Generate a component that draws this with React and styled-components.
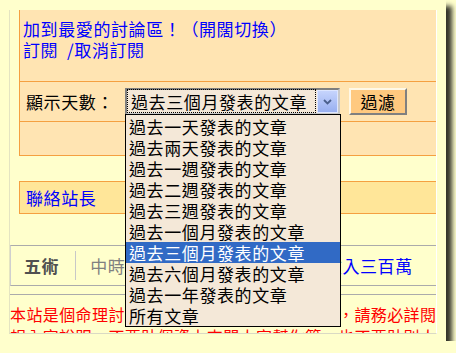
import React from "react";
import styled, { createGlobalStyle } from "styled-components";

const Global = createGlobalStyle`
  *, *::before, *::after { box-sizing: border-box; }
  html, body { margin: 0; padding: 0; background: #FFFFCC; }
  body {
    font-family: "Noto Sans CJK TC", "Noto Sans CJK SC", "Noto Sans", sans-serif;
    font-size: 17px;
    letter-spacing: 0.6px;
    line-height: 21px;
  }
`;

const Window = styled.div`
  width: 446px;
  height: 341px;
  padding: 10px 9px 7px;
  background: #FFFFCC;
  box-shadow: 6px 6px 5px rgba(0, 0, 0, 0.8);
`;

const Viewport = styled.div`
  height: 324px;
  border-left: 1px solid #E4E4C2;
  border-right: 1px solid #FFFFFF;
  border-bottom: 1px solid #DADAC4;
  overflow: hidden;
`;

const Content = styled.div`
  width: 450px;
  display: flex;
  flex-direction: column;
`;

const OrangeBox = styled.div`
  margin-left: 9px;
  background: #FFE4B2;
  border: 1px solid #F5A040;
  border-top: none;
  display: flex;
  flex-direction: column;
`;

const Row = styled.div`
  height: ${(p) => p.$h}px;
  border-bottom: ${(p) => (p.$line ? "1px solid #F5A040" : "none")};
  display: flex;
  flex-direction: ${(p) => (p.$column ? "column" : "row")};
  align-items: ${(p) => (p.$column ? "flex-start" : "center")};
  padding: ${(p) => p.$pad || "0"};
`;

const Link = styled.a`
  color: #0000FF;
  text-decoration: none;
  cursor: pointer;
  white-space: pre;
`;

const Label = styled.span`
  width: 99px;
  flex: none;
  color: #000;
  white-space: nowrap;
`;

const SelectWrap = styled.div`
  position: relative;
  width: 215px;
  height: 27px;
  border-style: solid;
  border-width: 2px;
  border-color: #7F7F7F #C8C8C8 #C8C8C8 #7F7F7F;
  background: #F4E8D8;
  display: flex;
  align-items: stretch;
`;

const SelectValue = styled.div`
  flex: 1;
  margin: -1px 1px 0 0;
  border: 1px dotted #000;
  padding-left: 3px;
  display: flex;
  align-items: center;
  white-space: nowrap;
  color: #000;
`;

const ArrowBtn = styled.div`
  width: 21px;
  flex: none;
  border: 1px solid #DDE6FF;
  background: linear-gradient(#C6D4FC, #98AFF0);
  display: flex;
  align-items: center;
  justify-content: center;
`;

const List = styled.div`
  position: absolute;
  left: -2px;
  top: 24px;
  width: 216px;
  border: 1px solid #000;
  background: #F4E8D8;
  padding-top: 1px;
  z-index: 10;
`;

const Option = styled.div`
  height: 21px;
  line-height: 21px;
  padding-left: 3px;
  white-space: nowrap;
  color: ${(p) => (p.$active ? "#FFFFFF" : "#000")};
  background: ${(p) => (p.$active ? "#316AC5" : "transparent")};
`;

const FilterButton = styled.button`
  margin-left: 9px;
  width: 58px;
  height: 27px;
  padding: 0;
  font: inherit;
  letter-spacing: inherit;
  color: #000;
  background: #FFC97F;
  border-style: solid;
  border-width: 2px;
  border-color: #FFF8E6 #808080 #808080 #FFF8E6;
  cursor: pointer;
`;

const YellowBox = styled.div`
  margin: 25px 0 0 9px;
  height: 33px;
  background: #FFE699;
  border: 1px solid #F5A040;
  border-right: none;
  display: flex;
  align-items: center;
  padding-left: 6px;
`;

const NewsBar = styled.div`
  margin-top: 31px;
  height: 41px;
  border-top: 1px solid #ABABAB;
  border-bottom: 1px solid #ABABAB;
  border-left: 1px solid #CFCFCF;
  display: flex;
  align-items: center;
  padding-left: 13px;
`;

const NewsTitle = styled.span`
  font-weight: bold;
  color: #505050;
`;

const Divider = styled.span`
  width: 1px;
  height: 29px;
  background: #C8C8C8;
  margin: 0 14px 0 16px;
`;

const Source = styled.span`
  color: #808080;
  margin-right: 41px;
  white-space: nowrap;
`;

const Notice = styled.div`
  margin-top: 8px;
  border-top: 1px solid #ABABAB;
  padding-top: 8px;
  width: 445px;
  color: #FF0000;
  font-size: 16px;
  letter-spacing: 0.4px;
  line-height: 22px;
`;

const options = [
  "過去一天發表的文章",
  "過去兩天發表的文章",
  "過去一週發表的文章",
  "過去二週發表的文章",
  "過去三週發表的文章",
  "過去一個月發表的文章",
  "過去三個月發表的文章",
  "過去六個月發表的文章",
  "過去一年發表的文章",
  "所有文章",
];

export default function App() {
  const selected = 6;
  return (
    <>
      <Global />
      <Window>
        <Viewport>
          <Content>
            <OrangeBox>
              <Row $h={72} $line $column $pad="8px 0 0 3px">
                <Link>加到最愛的討論區！（開闊切換）</Link>
                <Link>{"訂閱  /取消訂閱"}</Link>
              </Row>
              <Row $h={40} $line $pad="0 0 0 6px">
                <Label>顯示天數：</Label>
                <SelectWrap>
                  <SelectValue>{options[selected]}</SelectValue>
                  <ArrowBtn>
                    <svg width="9" height="6" viewBox="0 0 9 6">
                      <path d="M1 1 L4.5 4.5 L8 1" fill="none" stroke="#4A5F8C" strokeWidth="1.8" />
                    </svg>
                  </ArrowBtn>
                  <List>
                    {options.map((o, i) => (
                      <Option key={o} $active={i === selected}>{o}</Option>
                    ))}
                  </List>
                </SelectWrap>
                <FilterButton>過濾</FilterButton>
              </Row>
              <Row $h={33} />
            </OrangeBox>
            <YellowBox>
              <Link>聯絡站長</Link>
            </YellowBox>
            <NewsBar>
              <NewsTitle>五術</NewsTitle>
              <Divider />
              <Source>中時</Source>
              <Link>星座專家算命一年可收入三百萬</Link>
            </NewsBar>
            <Notice>
              本站是個命理討論區，並不提供付費算命服務，請務必詳閱版規內容說明，不要貼個資上來問人家幫你算，也不要貼別人的命盤，貼錯版面將會刪除。
            </Notice>
          </Content>
        </Viewport>
      </Window>
    </>
  );
}
